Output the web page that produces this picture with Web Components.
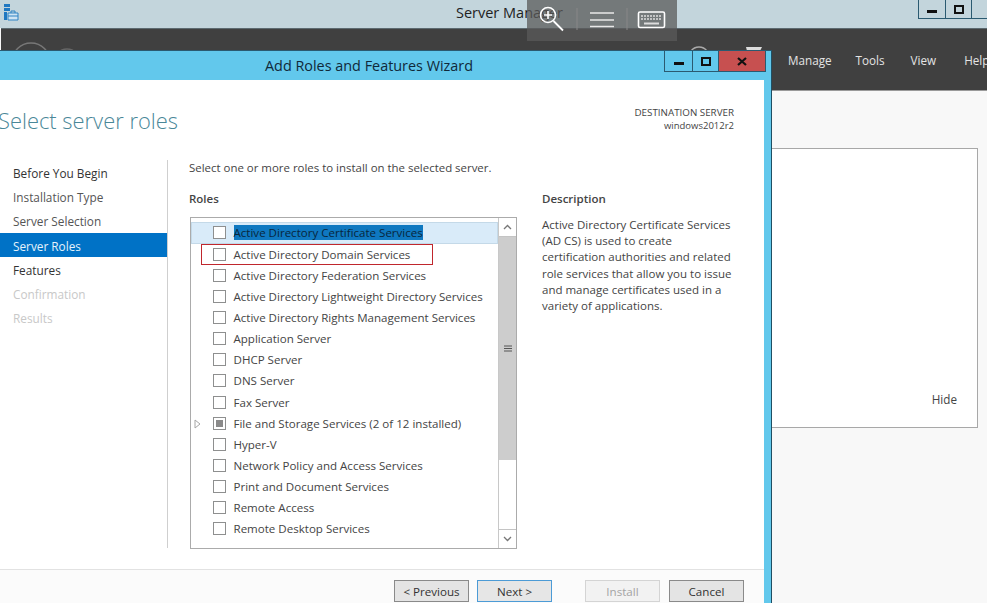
<!DOCTYPE html>
<html>
<head>
<meta charset="utf-8">
<title>Server Manager</title>
<style>
	html, body { margin: 0; padding: 0; width: 987px; height: 603px; overflow: hidden; background: #f8f8f8; }
	body { font-family: "Open Sans", "Noto Sans", sans-serif; color: #333; position: relative; }
</style>
</head>
<body>
<server-manager></server-manager>
<zoom-toolbar></zoom-toolbar>
<wizard-window>
	<role-item checked-row>Active Directory Certificate Services</role-item>
	<role-item>Active Directory Domain Services</role-item>
	<role-item>Active Directory Federation Services</role-item>
	<role-item>Active Directory Lightweight Directory Services</role-item>
	<role-item>Active Directory Rights Management Services</role-item>
	<role-item>Application Server</role-item>
	<role-item>DHCP Server</role-item>
	<role-item>DNS Server</role-item>
	<role-item>Fax Server</role-item>
	<role-item partial expandable>File and Storage Services (2 of 12 installed)</role-item>
	<role-item>Hyper-V</role-item>
	<role-item>Network Policy and Access Services</role-item>
	<role-item>Print and Document Services</role-item>
	<role-item>Remote Access</role-item>
	<role-item>Remote Desktop Services</role-item>
</wizard-window>

<script>
class WinControls extends HTMLElement {
	constructor() {
		super();
		this.attachShadow({ mode: "open" });
		this.shadowRoot.innerHTML = `
			<style>
				:host { display: flex; height: var(--ctl-h, 21px); border: 1px solid #2b5a70; border-top: 0; box-sizing: border-box; }
				div { display: flex; align-items: center; justify-content: center; box-sizing: border-box; }
				.min { width: var(--min-w, 28px); border-right: 1px solid #2b5a70; }
				.max { width: var(--max-w, 26px); border-right: 1px solid #2b5a70; }
				.close { width: var(--close-w, 46px); background: var(--close-bg, #c75050); }
				svg { display: block; }
			</style>
			<div class="min"><svg width="10" height="10"><rect x="0" y="6" width="10" height="3" fill="#111"/></svg></div>
			<div class="max"><svg width="10" height="9"><rect x="1" y="1" width="8" height="7" fill="none" stroke="#111" stroke-width="2"/></svg></div>
			<div class="close"><svg width="10" height="9"><path d="M1 1 L9 8 M9 1 L1 8" stroke="#111" stroke-width="2.2" fill="none"/></svg></div>
		`;
	}
}
customElements.define("win-controls", WinControls);

class ServerManager extends HTMLElement {
	constructor() {
		super();
		this.attachShadow({ mode: "open" });
		this.shadowRoot.innerHTML = `
			<style>
				:host { display: block; width: 987px; height: 603px; background: #f8f8f8; overflow: hidden; }
				.title { height: 28px; background: #c3d5dc; display: flex; align-items: center; justify-content: center; position: relative; font-size: 14.5px; color: #222; padding: 0 0 4px 32px; box-sizing: border-box; }
				.title svg { position: absolute; left: 3px; top: 3px; }
				.title win-controls { position: absolute; left: 918px; top: 0; --ctl-h: 19px; --close-bg: transparent; --min-w: 27px; --max-w: 26px; --close-w: 46px; }
				.bar { height: 63px; background: #404040; margin-left: 1px; border-top: 1px solid #5c6a70; border-bottom: 1px solid #9a9a9a; box-sizing: border-box; position: relative; color: #e4e4e4; font-size: 11.7px; }
				.bar nav { display: flex; padding: 23px 0 0 787px; white-space: nowrap; }
				.bar nav span:nth-child(2) { margin-left: 24px; }
				.bar nav span:nth-child(3) { margin-left: 26px; }
				.bar nav span:nth-child(4) { margin-left: 28px; }
				.bar svg { position: absolute; left: 0; top: 0; }
				.panel { margin: 57px 9px 0 772px; height: 280px; background: #fff; border: 1px solid #a8a8a8; border-left: 0; box-sizing: border-box; display: flex; align-items: flex-end; justify-content: flex-end; padding: 0 20px 20px 0; font-size: 11.7px; color: #444; }
			</style>
			<div class="title">
				<svg width="16" height="18" viewBox="0 0 16 18">
					<rect x="1" y="1" width="6" height="3" fill="#1f78c1"/>
					<rect x="1" y="5" width="6" height="3" fill="#1f78c1"/>
					<rect x="1" y="9" width="3" height="8" fill="#1f78c1"/>
					<path d="M5 10 H15 V17 H5 Z" fill="#cfe4f3" stroke="#2f83c4"/>
					<path d="M8 10 V8 H12 V10" fill="none" stroke="#2f83c4"/>
					<path d="M5 13 H15" stroke="#2f83c4"/>
				</svg>
				<span>Server Manager</span>
				<win-controls></win-controls>
			</div>
			<div class="bar">
				<svg width="780" height="24" viewBox="0 0 780 24">
					<circle cx="30" cy="33" r="19" fill="none" stroke="#777" stroke-width="1.5"/>
					<circle cx="66" cy="33" r="13" fill="none" stroke="#666" stroke-width="1.5"/>
					<path d="M690 22 a10 10 0 0 1 16 0" fill="none" stroke="#aaa" stroke-width="1.5"/>
					<path d="M745 18 H761 L759 22 H746 Z" fill="#ddd"/>
				</svg>
				<nav><span>Manage</span><span>Tools</span><span>View</span><span>Help</span></nav>
			</div>
			<div class="panel"><span>Hide</span></div>
		`;
	}
}
customElements.define("server-manager", ServerManager);

class ZoomToolbar extends HTMLElement {
	constructor() {
		super();
		this.attachShadow({ mode: "open" });
		this.shadowRoot.innerHTML = `
			<style>
				:host { display: block; position: absolute; left: 527px; top: 0; width: 150px; height: 41px; background: rgba(90,90,90,.75); }
				svg { display: block; position: absolute; left: 0; top: 0; }
			</style>
			<svg width="150" height="41" viewBox="0 0 150 41" fill="none" stroke="#fff">
				<circle cx="21" cy="15" r="7.5" stroke-width="1.6"/>
				<path d="M17 15 H25 M21 11 V19" stroke-width="1.6"/>
				<path d="M26.5 21 L36 30.5" stroke-width="1.8"/>
				<path d="M50 8 V30 M100 8 V30" stroke="#888"/>
				<path d="M63 13 H87 M63 20 H87 M63 26.5 H87" stroke="#e8e8e8" stroke-width="1.4"/>
				<rect x="111.5" y="12" width="26" height="15.5" rx="1.5" stroke-width="1.6"/>
				<path d="M114 16 H135 M114 19 H135" stroke-width="1.6" stroke-dasharray="2 1" stroke="#ddd"/>
				<path d="M117 23.5 H132" stroke-width="2" stroke="#ddd"/>
			</svg>
		`;
	}
}
customElements.define("zoom-toolbar", ZoomToolbar);

class NavItem extends HTMLElement {
	constructor() {
		super();
		this.attachShadow({ mode: "open" });
		this.shadowRoot.innerHTML = `
			<style>
				:host { display: block; height: 24.2px; line-height: 27px; padding-left: 13px; font-size: 11.8px; color: #555; }
				:host([current]) { background: #0072c6; color: #e6f3fb; }
				:host([near]) { color: #333; }
				:host([disabled]) { color: #c8c8c8; }
			</style>
			<slot></slot>
		`;
	}
}
customElements.define("nav-item", NavItem);

class RoleItem extends HTMLElement {
	constructor() {
		super();
		this.attachShadow({ mode: "open" });
		this.shadowRoot.innerHTML = `
			<style>
				:host { display: flex; align-items: center; height: 21.15px; font-size: 11.55px; color: #444; padding-left: 22px; position: relative; white-space: nowrap; }
				:host([checked-row]) { background: #d9ebf9; box-shadow: inset 0 0 0 1px #c4d9e8; color: #0b2a42; }
				:host([checked-row]) .label { background: #0f78c0; color: #08263c; }
				.box { width: 11px; height: 11px; border: 1px solid #8e8f8f; background: #fff; margin-right: 7.5px; flex: none; position: relative; }
				:host([partial]) .box::after { content: ""; position: absolute; inset: 2px; background: #8a8a8a; }
				.arrow { display: none; position: absolute; left: 3px; top: 6px; }
				:host([expandable]) .arrow { display: block; }
				.label { line-height: 15px; }
			</style>
			<svg class="arrow" width="7" height="10" viewBox="0 0 7 10"><path d="M1 1 L6 5 L1 9 Z" fill="#fff" stroke="#a6a6a6"/></svg>
			<span class="box"></span>
			<span class="label"><slot></slot></span>
		`;
	}
}
customElements.define("role-item", RoleItem);

class RoleList extends HTMLElement {
	constructor() {
		super();
		this.attachShadow({ mode: "open" });
		this.shadowRoot.innerHTML = `
			<style>
				:host { display: flex; width: 327px; height: 332px; box-sizing: border-box; border: 1px solid #ababab; background: #fff; }
				.rows { flex: 1; padding: 4.4px 0 0 0; min-width: 0; overflow: hidden; }
				.scroll { width: 18px; flex: none; display: flex; flex-direction: column; border-left: 1px solid #c8c8c8; box-sizing: border-box; }
				.btn { height: 19px; background: #fff; display: flex; align-items: center; justify-content: center; flex: none; border-bottom: 1px solid #c4c4c4; box-sizing: border-box; }
				.btn:last-child { border-bottom: 0; border-top: 1px solid #c4c4c4; }
				.thumb { height: 223px; background: #cdcdcd; display: flex; align-items: center; justify-content: center; flex: none; }
				.track { flex: 1; background: #fff; }
			</style>
			<div class="rows"><slot></slot></div>
			<div class="scroll">
				<div class="btn"><svg width="9" height="6"><path d="M1 5 L4.5 1.5 L8 5" fill="none" stroke="#777" stroke-width="1.3"/></svg></div>
				<div class="thumb"><svg width="8" height="7"><path d="M0 1 H8 M0 3.5 H8 M0 6 H8" stroke="#555"/></svg></div>
				<div class="track"></div>
				<div class="btn"><svg width="9" height="6"><path d="M1 1 L4.5 4.5 L8 1" fill="none" stroke="#777" stroke-width="1.3"/></svg></div>
			</div>
		`;
	}
}
customElements.define("role-list", RoleList);

class WizButton extends HTMLElement {
	constructor() {
		super();
		this.attachShadow({ mode: "open" });
		this.shadowRoot.innerHTML = `
			<style>
				:host { display: flex; flex: none; align-items: center; justify-content: center; width: 75px; height: 22px; box-sizing: border-box; border: 1px solid #8a8a8a; background: #e4e4e4; font-size: 11.6px; color: #333; }
				:host([default]) { border-color: #4c9bd6; background: #e6e6e6; }
				:host([disabled]) { border-color: #d4d4d4; background: #f2f2f2; color: #a4a4a4; }
			</style>
			<slot></slot>
		`;
	}
}
customElements.define("wiz-button", WizButton);

class WizardWindow extends HTMLElement {
	constructor() {
		super();
		this.attachShadow({ mode: "open" });
		this.shadowRoot.innerHTML = `
			<style>
				:host { display: flex; flex-direction: column; position: absolute; left: 0; top: 50px; width: 772px; height: 553px; box-sizing: border-box; background: #62c8ec; border-top: 1px solid #2b5a70; border-right: 1px solid #1f4f63; padding-right: 7px; font-size: 11.5px; color: #333; }
				.titlebar { height: 29px; flex: none; display: flex; justify-content: center; align-items: center; position: relative; font-size: 14.4px; color: #10293a; padding-right: 26px; box-sizing: border-box; }
				.titlebar win-controls { position: absolute; left: 664px; top: 0; }
				.client { flex: 1; background: #fff; display: flex; flex-direction: column; min-height: 0; }
				.head { height: 80px; flex: none; display: flex; justify-content: space-between; box-sizing: border-box; padding: 0 30px 0 0; }
				h1 { margin: 23px 0 0 -2px; font-size: 21.9px; font-weight: 300; color: #4a8798; line-height: 36px; }
				.dest { text-align: right; font-size: 9.8px; color: #444; line-height: 13px; padding-top: 26px; }
				.dest div + div { font-size: 9.5px; }
				.body { flex: 1; display: flex; min-height: 0; }
				nav { width: 168px; flex: none; box-sizing: border-box; height: 388px; border-right: 1px solid #cfcfcf; }
				.main { flex: 1; padding: 0 0 0 21px; min-width: 0; }
				.lead { line-height: 16px; height: 30px; color: #444; font-size: 11.45px; }
				.cols { display: flex; gap: 25px; }
				h2 { font-size: 11.5px; font-weight: 600; margin: 0; line-height: 17px; height: 27px; color: #444; }
				.desc { width: 200px; }
				.desc p { margin: 0; line-height: 16.2px; color: #444; }
				.rolecol { margin-left: 1px; }
				.rolecol h2 { margin-left: -1px; }
				.foot { height: 34px; flex: none; margin-top: 21px; background: #fbfbfb; border-top: 1px solid #e2e2e2; display: flex; padding: 10px 0 0 394px; box-sizing: border-box; }
				.foot wiz-button + wiz-button { margin-left: 8px; }
				.foot wiz-button[disabled] { margin-left: 33px; }
				.foot wiz-button[disabled] + wiz-button { margin-left: 9px; }
				.callout { position: absolute; left: 201px; top: 193px; width: 232px; height: 21px; box-sizing: border-box; border: 1px solid #c0272d; }
			</style>
			<div class="titlebar"><span>Add Roles and Features Wizard</span><win-controls></win-controls></div>
			<div class="client">
				<div class="head">
					<h1>Select server roles</h1>
					<div class="dest"><div>DESTINATION SERVER</div><div>windows2012r2</div></div>
				</div>
				<div class="body">
					<nav>
						<nav-item near>Before You Begin</nav-item>
						<nav-item>Installation Type</nav-item>
						<nav-item>Server Selection</nav-item>
						<nav-item current>Server Roles</nav-item>
						<nav-item near>Features</nav-item>
						<nav-item disabled>Confirmation</nav-item>
						<nav-item disabled>Results</nav-item>
					</nav>
					<div class="main">
						<div class="lead">Select one or more roles to install on the selected server.</div>
						<div class="cols">
							<div class="rolecol">
								<h2>Roles</h2>
								<role-list><slot></slot></role-list>
							</div>
							<div class="desc">
								<h2>Description</h2>
								<p>Active Directory Certificate Services<br>(AD CS) is used to create<br>certification authorities and related<br>role services that allow you to issue<br>and manage certificates used in a<br>variety of applications.</p>
							</div>
						</div>
					</div>
				</div>
				<div class="foot">
					<wiz-button>&lt; Previous</wiz-button>
					<wiz-button default>Next &gt;</wiz-button>
					<wiz-button disabled>Install</wiz-button>
					<wiz-button>Cancel</wiz-button>
				</div>
			</div>
			<div class="callout"></div>
		`;
	}
}
customElements.define("wizard-window", WizardWindow);
</script>
</body>
</html>
